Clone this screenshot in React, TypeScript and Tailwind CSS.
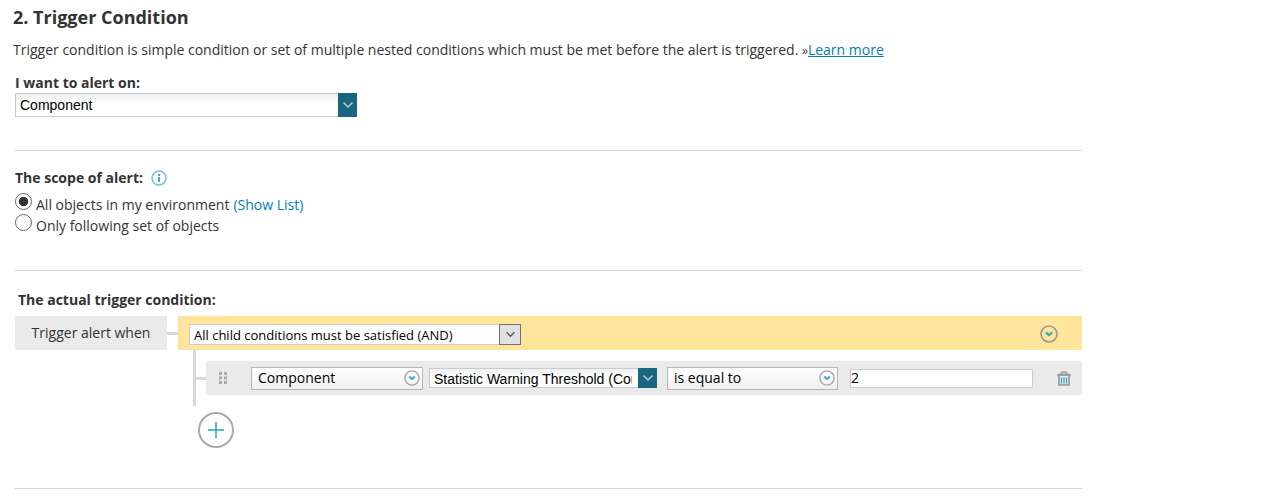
import { useState } from 'react'

function Chevron({ className }: { className: string }) {
  return (
    <svg viewBox="0 0 12 8" fill="none" stroke="currentColor" strokeWidth="1.5" className={className}>
      <path d="M1.5 1.5 6 6l4.500-4.500" />
    </svg>
  )
}

function CircleChevron({ className }: { className: string }) {
  return (
    <svg viewBox="0 0 18 18" fill="none" stroke="currentColor" className={className}>
      <circle cx="9" cy="9" r="8" strokeWidth="1.6" />
      <path d="M5.800 7.400 9 10l3.200-2.600" stroke="#3fa3bd" strokeWidth="2.200" />
    </svg>
  )
}

function TrashIcon() {
  return (
    <svg viewBox="0 0 14 15" fill="none" stroke="#9d9d9d" className="h-[15px] w-[14px]">
      <path d="M4.500 3V1.200h5V3" strokeWidth="1.500" />
      <path d="M.5 4h13" strokeWidth="2.600" />
      <path d="M2 5v8.800h10V5" fill="#e4eef1" strokeWidth="1.800" />
      <path d="M4.500 6.500V12.500M7 6.500V12.500M9.500 6.500V12.500" stroke="#3fa3bd" strokeWidth="1.300" />
    </svg>
  )
}

function ComboBox({ id, label, options, className }: { id: string; label?: string; options: string[]; className: string }) {
  return (
    <div className={`relative ${className}`}>
      <select
        id={id}
        aria-label={label}
        className="block h-full w-full appearance-none border border-[#c9cccc] bg-linear-to-b from-[#eef1f1] to-white to-50% pl-1 pr-6 font-['Liberation_Sans',sans-serif] text-sm/5 text-black outline-none"
      >
        {options.map((option) => (
          <option key={option}>{option}</option>
        ))}
      </select>
      <span className="pointer-events-none absolute inset-y-0 right-0 flex w-[19px] items-center justify-center bg-[#1c6580] text-[#b5d0da]">
        <Chevron className="h-2 w-3" />
      </span>
    </div>
  )
}

function RoundSelect({ label, options, className }: { label: string; options: string[]; className: string }) {
  return (
    <div className={`relative ${className}`}>
      <select
        aria-label={label}
        className="block h-[23px] w-full appearance-none border border-[#b5b5b5] bg-linear-to-b from-white to-[#f0f0f0] pl-1.5 pr-6 text-sm/5 text-black outline-none"
      >
        {options.map((option) => (
          <option key={option}>{option}</option>
        ))}
      </select>
      <CircleChevron className="pointer-events-none absolute top-[3px] right-[3px] size-4 text-[#a8a8a8]" />
    </div>
  )
}

function ScopeRadio({ id, checked, onChange }: { id: string; checked: boolean; onChange: () => void }) {
  return (
    <input
      id={id}
      type="radio"
      name="scope"
      checked={checked}
      onChange={onChange}
      className="size-[17px] appearance-none rounded-full border border-[#666] bg-white checked:bg-radial checked:from-[#333] checked:from-40% checked:to-white checked:to-48%"
    />
  )
}

export default function App() {
  const [scope, setScope] = useState('all')
  const [value, setValue] = useState('2')

  return (
    <main className="max-w-[1082px] pt-[5px] pb-4 font-['Open_Sans',sans-serif] text-sm/5 text-[#333]">
      <header className="pl-[13px]">
        <h2 className="text-lg/6 font-bold">2. Trigger Condition</h2>
        <p className="mt-[11px]">
          Trigger condition is simple condition or set of multiple nested conditions which must be met before the alert is triggered.{' '}
          <span className="text-xs">»</span>
          <a href="#" className="text-[#007fb0] underline">Learn more</a>
        </p>
      </header>

      <div className="pl-[15px]">
        <section className="mt-[13px] border-b border-[#d9d9d9] pb-[33px]">
          <label htmlFor="alert-on" className="block font-bold">I want to alert on:</label>
          <ComboBox id="alert-on" options={['Component', 'Application', 'Node']} className="h-6 w-[342px]" />
        </section>

        <section className="border-b border-[#d9d9d9] pt-[17px] pb-[35px]">
          <div className="flex items-center gap-2">
            <h3 className="font-bold">The scope of alert:</h3>
            <svg viewBox="0 0 16 16" fill="none" className="size-4">
              <circle cx="8" cy="8" r="7" stroke="#7abfe0" strokeWidth="1.500" />
              <path d="M8 7v5M8 4v2" stroke="#49a5d0" strokeWidth="2" />
            </svg>
          </div>
          <div className="mt-[5px] flex h-[21px] items-start gap-1">
            <ScopeRadio id="scope-all" checked={scope === 'all'} onChange={() => setScope('all')} />
            <label htmlFor="scope-all" className="pt-0.5">All objects in my environment</label>
            <a href="#" className="pt-0.5 text-[#007fb0]">(Show List)</a>
          </div>
          <div className="flex h-[21px] items-start gap-1">
            <ScopeRadio id="scope-set" checked={scope === 'set'} onChange={() => setScope('set')} />
            <label htmlFor="scope-set" className="pt-0.5">Only following set of objects</label>
          </div>
        </section>

        <section className="border-b border-[#d9d9d9] pt-[19px] pb-10">
          <h3 className="pl-[3px] font-bold">The actual trigger condition:</h3>

          <div className="mt-1.5 flex h-[34px] items-center">
            <div className="flex h-full w-[152px] items-center justify-center bg-[#eaeaea]">Trigger alert when</div>
            <div className="h-[3px] w-[11px] bg-[#d9d9d9]" />
            <div className="flex h-full flex-1 items-center justify-between bg-[#ffe59c] pt-0.5 pr-6 pl-[11px]">
              <div className="relative w-[332px]">
                <select
                  aria-label="Child conditions"
                  className="block h-[21px] w-full appearance-none border border-[#ccc] bg-white pl-1 pr-6 text-[13px]/5 text-black outline-none"
                >
                  <option>All child conditions must be satisfied (AND)</option>
                  <option>At least one child condition must be satisfied (OR)</option>
                </select>
                <span className="pointer-events-none absolute inset-y-0 right-0 flex w-[22px] items-center justify-center border border-[#707070] bg-[#e1e1e1] text-[#555]">
                  <Chevron className="h-[7px] w-[11px]" />
                </span>
              </div>
              <button type="button" aria-label="Group options" className="text-[#999]">
                <CircleChevron className="size-[18px]" />
              </button>
            </div>
          </div>

          <div className="ml-[178px] flex items-center border-l-[3px] border-[#d9d9d9] py-[11px]">
            <div className="h-[3px] w-[10px] bg-[#d9d9d9]" />
            <div className="flex h-[34px] flex-1 items-center bg-[#eaeaea] pr-[11px] pl-[13px]">
              <svg viewBox="0 0 8 12" fill="#aaa" className="mr-6 h-3 w-2">
                <path d="M0 0h3v3H0zM5 0h3v3H5zM0 4.500h3v3H0zM5 4.500h3v3H5zM0 9h3v3H0zM5 9h3v3H5z" />
              </svg>
              <RoundSelect label="Object type" options={['Component', 'Application', 'Node']} className="w-[172px]" />
              <ComboBox id="field" label="Field" options={['Statistic Warning Threshold (Component)']} className="ml-1.5 h-5 w-[228px]" />
              <RoundSelect label="Operator" options={['is equal to', 'is not equal to']} className="ml-[10px] w-[171px]" />
              <input
                aria-label="Value"
                value={value}
                onChange={(e) => setValue(e.target.value)}
                className="ml-3 h-[19px] min-w-0 flex-1 border border-[#ccc] bg-white text-sm text-black outline-none"
              />
              <button type="button" aria-label="Delete condition" className="ml-6">
                <TrashIcon />
              </button>
            </div>
          </div>

          <button
            type="button"
            aria-label="Add condition"
            className="mt-1.5 ml-[183px] flex size-9 items-center justify-center rounded-full border-2 border-[#aaa] bg-white"
          >
            <svg viewBox="0 0 16 16" stroke="#2f9fbd" strokeWidth="1.500" className="size-4">
              <path d="M8 0v16M0 8h16" />
            </svg>
          </button>
        </section>
      </div>
    </main>
  )
}
